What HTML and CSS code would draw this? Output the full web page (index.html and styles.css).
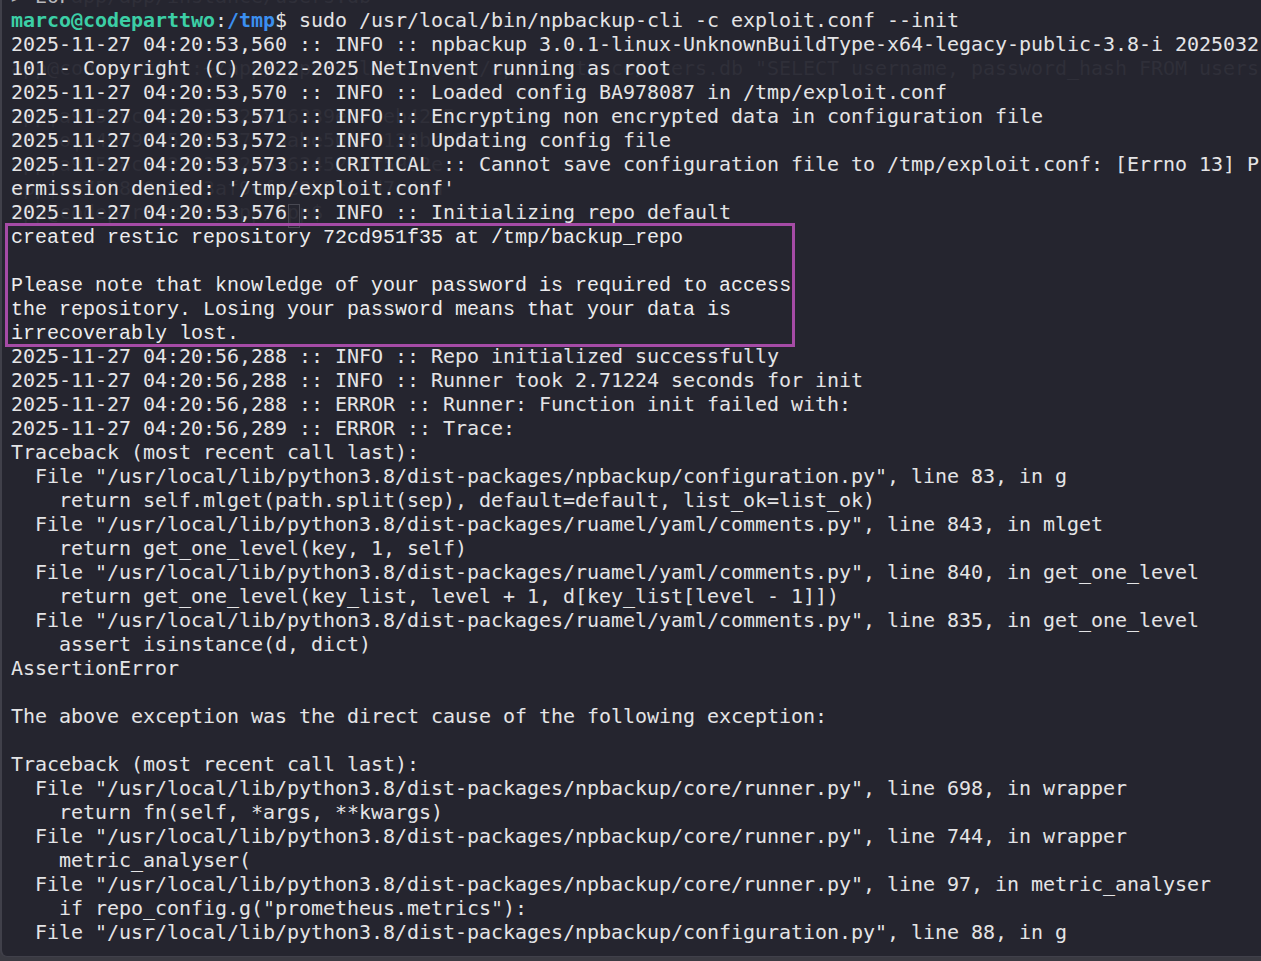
FILE: index.html
```html
<!DOCTYPE html>
<html>
<head>
<meta charset="utf-8">
<link rel="stylesheet" href="styles.css">
</head>
<body>
<div class="win">
  <div class="ghost" aria-hidden="true">
    <div class="ln">    /app/app/instance/users.db</div>
    <div class="ln"></div>
    <div class="ln"></div>
    <div class="ln">app@codeparttwo:~/app/app$ sqlite3 /app/app/instance/users.db "SELECT username, password_hash FROM users"</div>
    <div class="ln"></div>
    <div class="ln">app|a97588c0e2fa3a024876339e27aeb42e5</div>
    <div class="ln">marco|649c9d65a206a75f5abe509fe128bce5</div>
    <div class="ln">app|a97588c0e2fa3a0248763452a6c59b2e</div>
    <div class="ln">app|a97588c0e2fa3af90f4e8b5c21d7e43a</div>
    <div class="ln">app@codeparttwo:~/app/app$ <span class="gcur"> </span></div>
  </div>
  <div class="term">
    <div class="ln first">&gt; EOF</div>
    <div class="ln"><span class="usr">marco@codeparttwo</span>:<span class="dir">/tmp</span>$ sudo /usr/local/bin/npbackup-cli -c exploit.conf --init</div>
    <div class="ln">2025-11-27 04:20:53,560 :: INFO :: npbackup 3.0.1-linux-UnknownBuildType-x64-legacy-public-3.8-i 2025032</div>
    <div class="ln">101 - Copyright (C) 2022-2025 NetInvent running as root</div>
    <div class="ln">2025-11-27 04:20:53,570 :: INFO :: Loaded config BA978087 in /tmp/exploit.conf</div>
    <div class="ln">2025-11-27 04:20:53,571 :: INFO :: Encrypting non encrypted data in configuration file</div>
    <div class="ln">2025-11-27 04:20:53,572 :: INFO :: Updating config file</div>
    <div class="ln">2025-11-27 04:20:53,573 :: CRITICAL :: Cannot save configuration file to /tmp/exploit.conf: [Errno 13] P</div>
    <div class="ln">ermission denied: '/tmp/exploit.conf'</div>
    <div class="ln">2025-11-27 04:20:53,576 :: INFO :: Initializing repo default</div>
    <div class="hl">
      <div class="ln rs">created restic repository 72cd951f35 at /tmp/backup_repo</div>
      <div class="ln rs"></div>
      <div class="ln rs">Please note that knowledge of your password is required to access</div>
      <div class="ln rs">the repository. Losing your password means that your data is</div>
      <div class="ln rs">irrecoverably lost.</div>
    </div>
    <div class="ln">2025-11-27 04:20:56,288 :: INFO :: Repo initialized successfully</div>
    <div class="ln">2025-11-27 04:20:56,288 :: INFO :: Runner took 2.71224 seconds for init</div>
    <div class="ln">2025-11-27 04:20:56,288 :: ERROR :: Runner: Function init failed with:</div>
    <div class="ln">2025-11-27 04:20:56,289 :: ERROR :: Trace:</div>
    <div class="ln">Traceback (most recent call last):</div>
    <div class="ln">  File "/usr/local/lib/python3.8/dist-packages/npbackup/configuration.py", line 83, in g</div>
    <div class="ln">    return self.mlget(path.split(sep), default=default, list_ok=list_ok)</div>
    <div class="ln">  File "/usr/local/lib/python3.8/dist-packages/ruamel/yaml/comments.py", line 843, in mlget</div>
    <div class="ln">    return get_one_level(key, 1, self)</div>
    <div class="ln">  File "/usr/local/lib/python3.8/dist-packages/ruamel/yaml/comments.py", line 840, in get_one_level</div>
    <div class="ln">    return get_one_level(key_list, level + 1, d[key_list[level - 1]])</div>
    <div class="ln">  File "/usr/local/lib/python3.8/dist-packages/ruamel/yaml/comments.py", line 835, in get_one_level</div>
    <div class="ln">    assert isinstance(d, dict)</div>
    <div class="ln">AssertionError</div>
    <div class="ln"></div>
    <div class="ln">The above exception was the direct cause of the following exception:</div>
    <div class="ln"></div>
    <div class="ln">Traceback (most recent call last):</div>
    <div class="ln">  File "/usr/local/lib/python3.8/dist-packages/npbackup/core/runner.py", line 698, in wrapper</div>
    <div class="ln">    return fn(self, *args, **kwargs)</div>
    <div class="ln">  File "/usr/local/lib/python3.8/dist-packages/npbackup/core/runner.py", line 744, in wrapper</div>
    <div class="ln">    metric_analyser(</div>
    <div class="ln">  File "/usr/local/lib/python3.8/dist-packages/npbackup/core/runner.py", line 97, in metric_analyser</div>
    <div class="ln">    if repo_config.g("prometheus.metrics"):</div>
    <div class="ln">  File "/usr/local/lib/python3.8/dist-packages/npbackup/configuration.py", line 88, in g</div>
  </div>
</div>
</body>
</html>
```

FILE: styles.css
```css
html, body {
  margin: 0;
  padding: 0;
  background: #3a3a42;
  overflow: hidden;
}

.win {
  position: relative;
  height: 957px;
  width: 1261px;
  box-sizing: border-box;
  background: #25252f;
  border-left: 2px solid #40404a;
  border-bottom: 1px solid #40404a;
  border-bottom-left-radius: 7px;
  overflow: hidden;
}

.term, .ghost {
  padding-left: 9px;
  font-family: "DejaVu Sans Mono", monospace;
  font-size: 20px;
  letter-spacing: -0.04px;
  line-height: 24px;
}

.term {
  position: relative;
  color: #e4e4e6;
  margin-top: -16px;
}

.ghost {
  position: absolute;
  top: -16px;
  left: 0;
  color: #2f2f39;
}

.gcur {
  display: inline-block;
  width: 10px;
  height: 22px;
  vertical-align: -5px;
  border: 1px solid #484852;
  margin-left: -47px;
}

.ln {
  height: 24px;
  white-space: pre;
}

.first {
  color: #b8b8bc;
}

.usr {
  color: #3ccfa6;
  font-weight: bold;
}

.dir {
  color: #3b8ff0;
  font-weight: bold;
}

.hl {
  width: 784px;
  margin-top: 2px;
  margin-left: -3px;
  padding-left: 3px;
  box-sizing: border-box;
  outline: 3px solid #a54ba6;
}

.rs {
  font-family: "Liberation Mono", monospace;
  font-size: 20px;
  letter-spacing: 0;
  color: #ececee;
}

.rs:last-child {
  height: 22px;
}
```
